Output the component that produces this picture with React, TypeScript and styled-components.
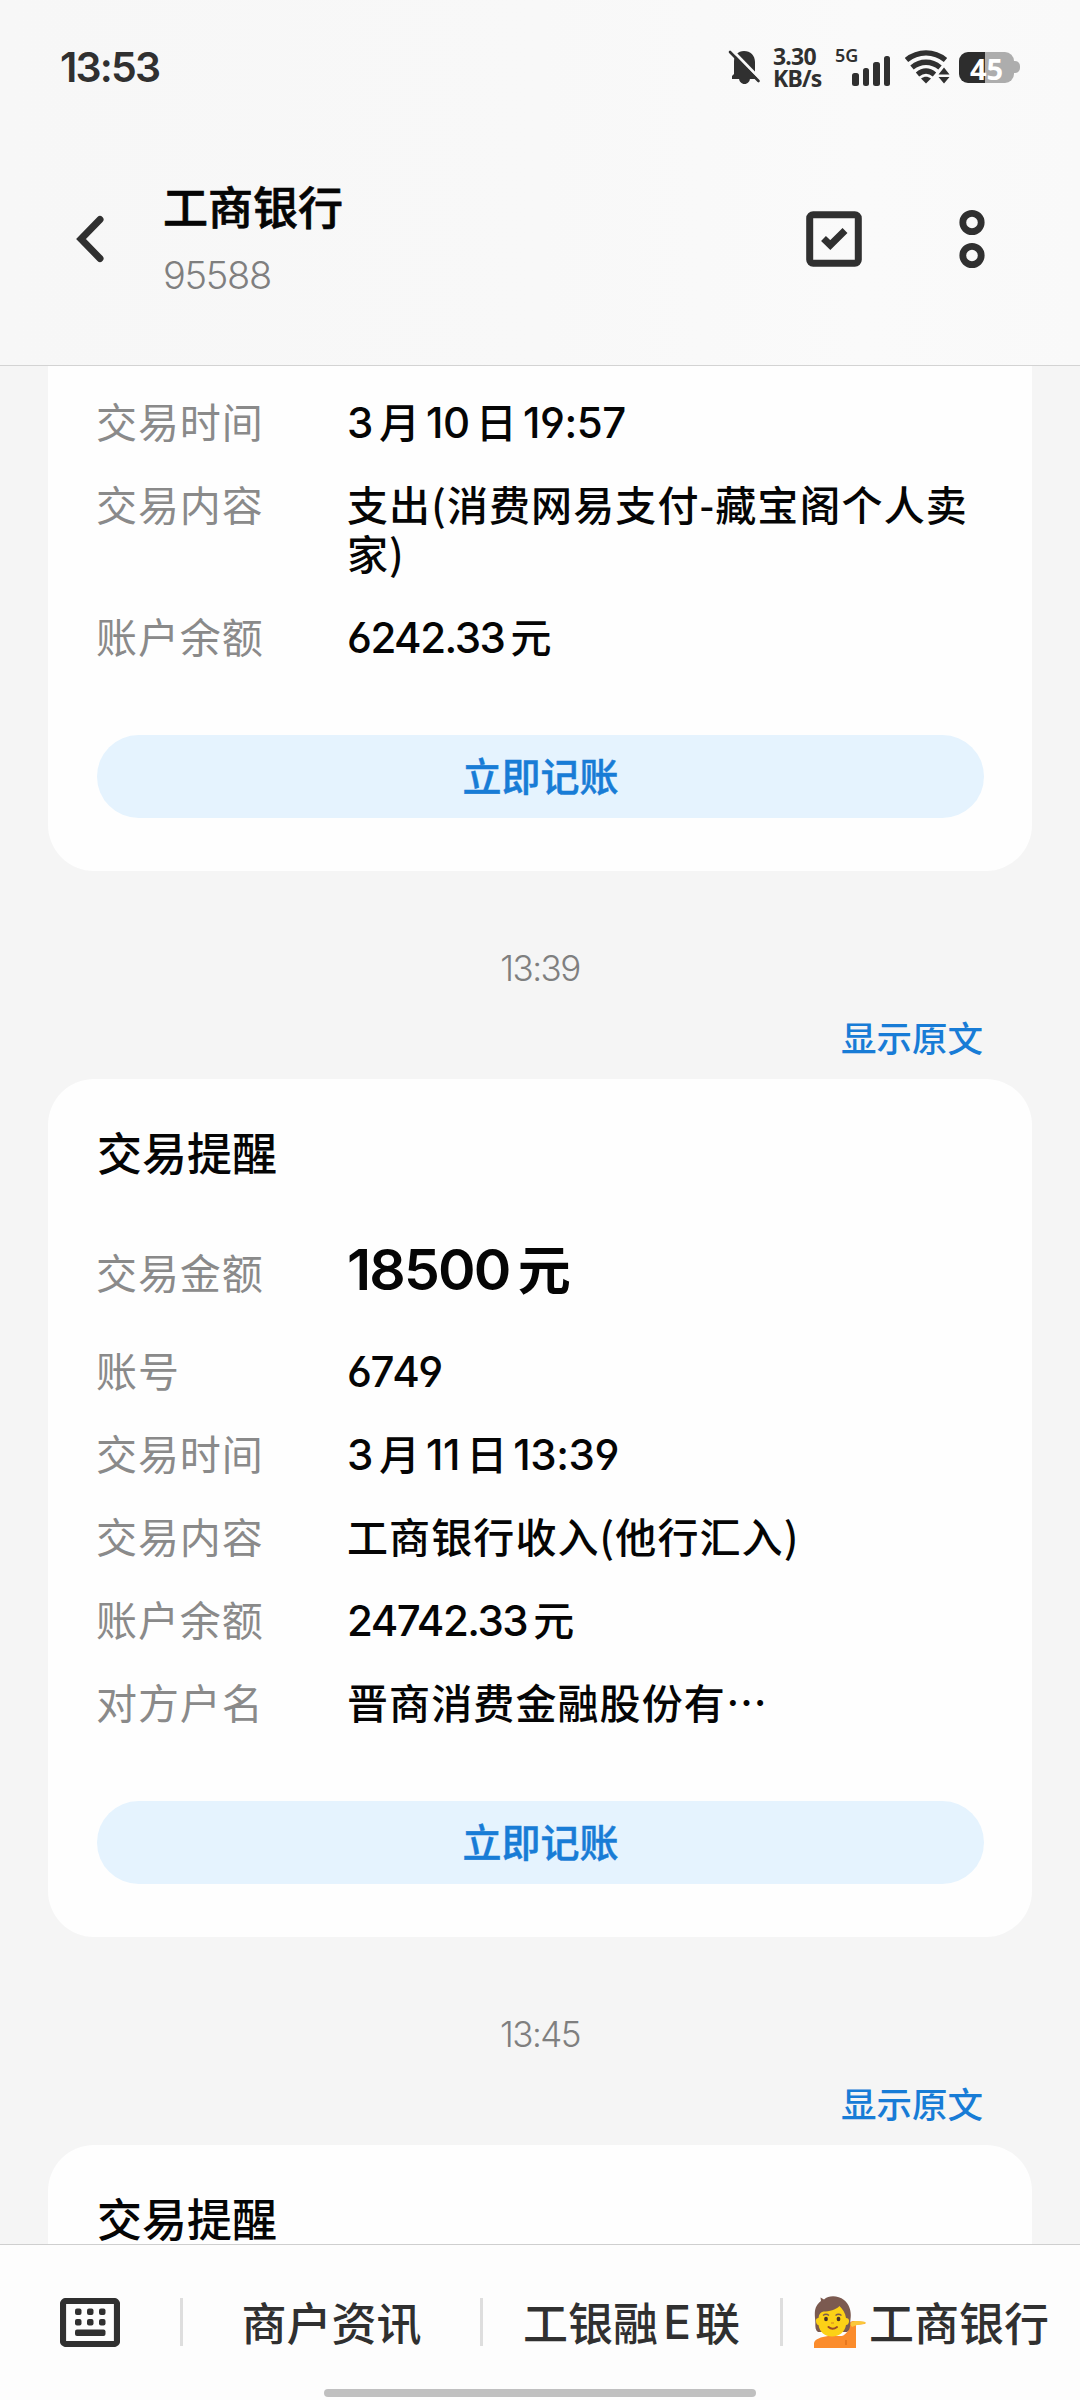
import React from "react";
import styled, { createGlobalStyle } from "styled-components";

const cjk = `"Noto Sans CJK SC", sans-serif`;

const GlobalStyle = createGlobalStyle`
  * { box-sizing: border-box; }
  body { margin: 0; background: #f5f5f5; font-family: Inter, ${cjk}; }
`;

const Screen = styled.div`
  width: 1080px;
  height: 2400px;
  display: flex;
  flex-direction: column;
  overflow: hidden;
  background: #f5f5f5;
  color: #050505;
`;

const Header = styled.header`
  flex: none;
  height: 366px;
  border-bottom: 1px solid #d3d3d3;
  background: linear-gradient(90deg, #f7f7f7 0%, #f8f8f8 50%, #fafafa 80%, #f9f9f9 100%);
`;

const StatusBar = styled.div`
  height: 134px;
  padding: 0 60px;
  display: flex;
  align-items: center;
  justify-content: space-between;
  color: #303030;
`;

const Clock = styled.div`
  font-size: 41px;
  font-weight: 600;
  letter-spacing: -1.8px;
`;

const StatusIcons = styled.div`
  display: flex;
  align-items: center;
`;

const Speed = styled.div`
  width: 74px;
  padding-left: 12px;
  font: 700 23px/22px "Noto Sans", sans-serif;
  letter-spacing: -0.8px;
  white-space: nowrap;
`;

const Signal = styled.div`
  display: flex;
  width: 70px;
  height: 38px;
`;

const NetworkType = styled.span`
  width: 17px;
  font: 600 18px/14px "Noto Sans", sans-serif;
  white-space: nowrap;
`;

const Bars = styled.div`
  display: flex;
  align-items: flex-end;
  gap: 4px;
`;

const Bar = styled.i<{ $h: number }>`
  width: 6.5px;
  height: ${(p) => p.$h}px;
  border-radius: 2.5px;
  background: #303030;
`;

const Battery = styled.div`
  width: 55px;
  height: 31px;
  margin-left: 9px;
  border-radius: 9px;
  background: linear-gradient(90deg, #2d2d2d 26px, #adadad 26px);
  color: #fff;
  font: 700 29px/33px "Noto Sans", sans-serif;
  text-align: center;
`;

const BatteryTip = styled.i`
  width: 6px;
  height: 12px;
  border-radius: 0 5px 5px 0;
  background: #adadad;
`;

const NavBar = styled.div`
  height: 210px;
  padding: 0 95px 0 75px;
  display: flex;
  align-items: center;
`;

const Contact = styled.div`
  flex: 1;
  padding-left: 58px;
  display: flex;
  flex-direction: column;
  gap: 14px;
`;

const ContactName = styled.h1`
  margin: -3px 0 0;
  font: 500 45px/60px ${cjk};
  -webkit-text-stroke: 0.7px #050505;
`;

const ContactNumber = styled.div`
  font-size: 38px;
  font-weight: 350;
  line-height: 50px;
  letter-spacing: -1.3px;
  color: #7f7f7f;
`;

const NavActions = styled.div`
  display: flex;
  align-items: center;
  gap: 97px;
`;

const Thread = styled.main`
  flex: 1;
  min-height: 0;
  overflow: hidden;
  padding: 0 48px;
`;

const Card = styled.section<{ $cut?: boolean }>`
  padding: ${(p) => (p.$cut ? "30px" : "43px")} 48px 53px 49px;
  border-radius: ${(p) => (p.$cut ? "0 0 46px 46px" : "46px")};
  background: #fefefe;
`;

const CardTitle = styled.h2`
  margin: 0 0 55px;
  font: 500 45px/60px ${cjk};
`;

const Rows = styled.dl`
  margin: 0 0 0 -1px;
  display: flex;
  flex-direction: column;
  gap: 34px;
`;

const Row = styled.div<{ $large?: boolean }>`
  display: grid;
  grid-template-columns: 251px 1fr;
  align-items: start;
  line-height: ${(p) => (p.$large ? "68px" : "49px")};
  margin-bottom: ${(p) => (p.$large ? "6px" : "0")};
`;

const Label = styled.dt`
  font-family: ${cjk};
  font-size: 41px;
  font-weight: 400;
  letter-spacing: 0.9px;
  color: #8a8a8a;
`;

const Value = styled.dd<{ $large?: boolean }>`
  margin: 0;
  font-size: ${(p) => (p.$large ? "53px" : "41px")};
  font-weight: ${(p) => (p.$large ? 700 : 500)};
  letter-spacing: ${(p) => (p.$large ? "0" : "1.1px")};
  line-height: ${(p) => (p.$large ? "61px" : "49px")};
  font-family: ${cjk};
`;

const Num = styled.span<{ $large?: boolean; $track?: number }>`
  font-family: Inter, sans-serif;
  font-size: ${(p) => (p.$large ? "57px" : "42px")};
  font-weight: ${(p) => (p.$large ? 600 : 500)};
  line-height: 1;
  font-feature-settings: "cv03", "cv04";
  letter-spacing: ${(p) => p.$track ?? -0.4}px;
  margin-right: ${(p) => (p.$large ? 8 : 6)}px;
  & + & { margin-left: 5px; }
`;

const BookButton = styled.button`
  display: block;
  width: 100%;
  height: 83px;
  margin-top: 75px;
  padding: 0;
  border: 0;
  border-radius: 42px;
  background: #e5f3fe;
  color: #187cd6;
  font: 500 39px/79px ${cjk};
  -webkit-text-stroke: 0.5px #187cd6;
  & > span { display: block; height: 83px; }
`;

const Stamp = styled.time`
  display: block;
  padding-top: 75px;
  height: 145px;
  line-height: 44px;
  text-align: center;
  font-size: 35px;
  font-weight: 350;
  letter-spacing: -1.5px;
  color: #7f7f7f;
`;

const SourceLink = styled.a`
  display: block;
  height: 63px;
  padding-right: 49px;
  text-align: right;
  font: 500 35.5px/42px ${cjk};
  color: #187cd6;
`;

const Footer = styled.footer`
  flex: none;
  height: 156px;
  border-top: 1px solid #cfcfcf;
  background: #fdfdfd;
  display: flex;
  flex-direction: column;
  align-items: center;
`;

const Menu = styled.nav`
  width: 100%;
  height: 144px;
  padding-top: 53px;
  display: grid;
  grid-template-columns: 180px 300px 300px 300px;
`;

const MenuItem = styled.div<{ $first?: boolean }>`
  height: 48px;
  display: flex;
  align-items: center;
  justify-content: center;
  gap: 3px;
  border-left: ${(p) => (p.$first ? "0" : "3px solid #dedede")};
  font: 500 45px/48px ${cjk};
  white-space: nowrap;
  color: #303030;
`;

const Latin = styled.span`
  margin: 0 1px 0 2px;
  font-family: Inter, sans-serif;
  font-size: 46px;
`;

const HomeBar = styled.div`
  width: 432px;
  height: 8px;
  margin-right: 1px;
  border-radius: 4px;
  background: #c0c0c0;
`;

const BellOff = () => (
  <svg width="33" height="38" viewBox="0 0 33 38">
    <path d="M4 30V28L6 26V14C6 7 10 3 16 3c6.500 0 11 4.500 11 11v12l2 2v3H4z" fill="#303030" />
    <path d="M11 30h11c0 3.500-2.500 6-5.500 6S11 33.500 11 30z" fill="#303030" />
    <path d="M4 2l29 30" stroke="#f8f8f8" strokeWidth="3" />
    <path d="M2 4l28.500 29" stroke="#303030" strokeWidth="2.600" strokeLinecap="round" />
  </svg>
);

const Wifi = () => (
  <svg width="45" height="36" viewBox="0 0 45 36">
    <g fill="none" stroke="#303030" strokeWidth="5.300">
      <path d="M1.500 11C13 1.500 29 1.500 40.500 11" />
      <path d="M7 18.500c8.500-7 19.500-7 28 0" />
      <path d="M12.500 25.500c5.500-4.500 11.500-4.500 17 0" />
    </g>
    <path d="M16 29.500c3.500-2.200 6.500-2.200 10 0L21 34.500z" fill="#303030" />
    <path d="M39 16l8 10.500L39 37l-8-10.500z" fill="#f9f9f9" />
    <path d="M39 18.500l5.500 7h-11zM39 34.500l5.500-6.500h-11z" fill="#303030" />
  </svg>
);

const BackIcon = () => (
  <svg width="30" height="50" viewBox="0 0 30 50">
    <path d="M25 5.500L6 25l19 19.500" fill="none" stroke="#303030" strokeWidth="7" strokeLinecap="round" />
  </svg>
);

const SelectIcon = () => (
  <svg width="56" height="56" viewBox="0 0 56 56">
    <rect x="3.700" y="3.700" width="48.600" height="48.600" rx="3.500" fill="none" stroke="#303030" strokeWidth="7" />
    <path d="M17.500 27.500l6.800 6.500L39 19.500" fill="none" stroke="#303030" strokeWidth="7" />
  </svg>
);

const MoreIcon = () => (
  <svg width="26" height="60" viewBox="0 0 26 60" fill="none" stroke="#303030" strokeWidth="6.800">
    <circle cx="13" cy="13.500" r="9.200" />
    <circle cx="13" cy="46.500" r="9.200" />
  </svg>
);

const KeyboardIcon = () => (
  <svg width="60" height="49" viewBox="0 0 60 49">
    <rect x="3" y="3" width="54" height="43" rx="3" fill="none" stroke="#303030" strokeWidth="6.200" />
    <g fill="#303030">
      {[15, 27, 39].map((x) =>
        [10.5, 21].map((y) => <rect key={`${x}-${y}`} x={x} y={y} width="6.500" height="6.500" rx="2" />)
      )}
      <rect x="15" y="31.500" width="30.500" height="6.500" rx="2" />
    </g>
  </svg>
);

const PersonEmoji = () => (
  <svg width="52" height="52" viewBox="0 0 52 52">
    <path d="M0 52v-5c1-4 7-6 14-7h14c5-2 7-6 8-13 0-1.500 2-2 5-2l9.500 1c1.500.4 1.500 1.700 0 2L42 29v23z" fill="#fb8c2c" />
    <path d="M36 28c1-2.500 4-3 8-3l6.500.8c1.400.4 1.400 1.700 0 2L43 29l-5 2z" fill="#fbc83a" />
    <path d="M32 44v5" stroke="#e07018" strokeWidth="1.500" />
    <path d="M4 36C0 33 2 28 1 22 0 12 3 8 7 5L6.500 1.500 10 3.500C15-1 24-.5 30 4c6 5 7.500 12 6.500 19-.5 5 .5 10-3.500 13z" fill="#7b5a50" />
    <path d="M2 25c-.5-2 1-3 2.500-3 .5-4 2-6 5-6.500 6 0 12-1.500 16-5.500 3 3 6 7 6.500 12 2 0 3 1 3 3s-1 4-3 4c-1 7-7 11.500-14 11.500S5.500 36 4.500 29C3 29 2 27 2 25z" fill="#fcd116" />
    <ellipse cx="12" cy="23" rx="1.900" ry="2.200" fill="#4a3226" />
    <ellipse cx="24.500" cy="23" rx="1.900" ry="2.200" fill="#4a3226" />
    <path d="M9 19.500q3-2.500 6 0M21.500 19.500q3-2.500 6 0" fill="none" stroke="#7b5a50" strokeWidth="1.300" />
    <path d="M14.500 31q4 3.500 8.500 0" fill="none" stroke="#9c4a28" strokeWidth="2" strokeLinecap="round" />
    <path d="M17 27h3" stroke="#e09a20" strokeWidth="1.500" />
  </svg>
);

const Receipt = ({ label, large, children }: { label: string; large?: boolean; children: React.ReactNode }) => (
  <Row $large={large}>
    <Label>{label}</Label>
    <Value $large={large}>{children}</Value>
  </Row>
);

export default function App() {
  return (
    <>
      <GlobalStyle />
      <Screen lang="zh-CN">
        <Header>
          <StatusBar>
            <Clock>13:53</Clock>
            <StatusIcons>
              <BellOff />
              <Speed>
                3.30
                <br />
                KB/s
              </Speed>
              <Signal>
                <NetworkType>5G</NetworkType>
                <Bars>
                  {[13, 18, 24, 30].map((h) => (
                    <Bar key={h} $h={h} />
                  ))}
                </Bars>
              </Signal>
              <Wifi />
              <Battery>45</Battery>
              <BatteryTip />
            </StatusIcons>
          </StatusBar>
          <NavBar>
            <BackIcon />
            <Contact>
              <ContactName>工商银行</ContactName>
              <ContactNumber>95588</ContactNumber>
            </Contact>
            <NavActions>
              <SelectIcon />
              <MoreIcon />
            </NavActions>
          </NavBar>
        </Header>

        <Thread>
          <Card $cut>
            <Rows>
              <Receipt label="交易时间">
                <Num>3</Num>月<Num>10</Num>日<Num>19:57</Num>
              </Receipt>
              <Receipt label="交易内容">支出(消费网易支付-藏宝阁个人卖家)</Receipt>
              <Receipt label="账户余额">
                <Num $track={-1.5}>6242.33</Num>元
              </Receipt>
            </Rows>
            <BookButton>
              <span>立即记账</span>
            </BookButton>
          </Card>

          <Stamp>13:39</Stamp>
          <SourceLink>显示原文</SourceLink>
          <Card>
            <CardTitle>交易提醒</CardTitle>
            <Rows>
              <Receipt label="交易金额" large>
                <Num $large $track={-1.8}>18500</Num>元
              </Receipt>
              <Receipt label="账号">
                <Num $track={0.2}>6749</Num>
              </Receipt>
              <Receipt label="交易时间">
                <Num>3</Num>月<Num>11</Num>日<Num>13:39</Num>
              </Receipt>
              <Receipt label="交易内容">工商银行收入(他行汇入)</Receipt>
              <Receipt label="账户余额">
                <Num $track={-1.5}>24742.33</Num>元
              </Receipt>
              <Receipt label="对方户名">晋商消费金融股份有…</Receipt>
            </Rows>
            <BookButton>
              <span>立即记账</span>
            </BookButton>
          </Card>

          <Stamp>13:45</Stamp>
          <SourceLink>显示原文</SourceLink>
          <Card>
            <CardTitle>交易提醒</CardTitle>
          </Card>
        </Thread>

        <Footer>
          <Menu>
            <MenuItem $first>
              <KeyboardIcon />
            </MenuItem>
            <MenuItem>商户资讯</MenuItem>
            <MenuItem>
              工银融<Latin>E</Latin>联
            </MenuItem>
            <MenuItem>
              <PersonEmoji />
              工商银行
            </MenuItem>
          </Menu>
          <HomeBar />
        </Footer>
      </Screen>
    </>
  );
}
